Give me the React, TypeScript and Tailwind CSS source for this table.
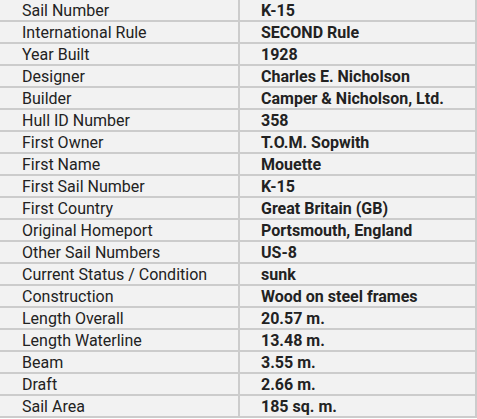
const rows: [string, string][] = [
  ["Sail Number", "K-15"],
  ["International Rule", "SECOND Rule"],
  ["Year Built", "1928"],
  ["Designer", "Charles E. Nicholson"],
  ["Builder", "Camper & Nicholson, Ltd."],
  ["Hull ID Number", "358"],
  ["First Owner", "T.O.M. Sopwith"],
  ["First Name", "Mouette"],
  ["First Sail Number", "K-15"],
  ["First Country", "Great Britain (GB)"],
  ["Original Homeport", "Portsmouth, England"],
  ["Other Sail Numbers", "US-8"],
  ["Current Status / Condition", "sunk"],
  ["Construction", "Wood on steel frames"],
  ["Length Overall", "20.57 m."],
  ["Length Waterline", "13.48 m."],
  ["Beam", "3.55 m."],
  ["Draft", "2.66 m."],
  ["Sail Area", "185 sq. m."],
];

export default function App() {
  return (
    <div className="h-[419px] w-[477px] overflow-hidden bg-white font-['Roboto',sans-serif] text-[16px] text-[#222]">
      <div className="grid grid-cols-[238px_235px] gap-[2px] bg-[#cccccc] pr-[2px] pb-[2px]">
        {rows.map(([label, value]) => (
          <div key={label} className="contents">
            <div className="h-[20px] bg-[#f2f2f2] pl-[22px] leading-[22px] whitespace-nowrap">{label}</div>
            <div className="h-[20px] bg-[#f2f2f2] pl-[21px] leading-[22px] font-bold whitespace-nowrap">{value}</div>
          </div>
        ))}
      </div>
    </div>
  );
}
